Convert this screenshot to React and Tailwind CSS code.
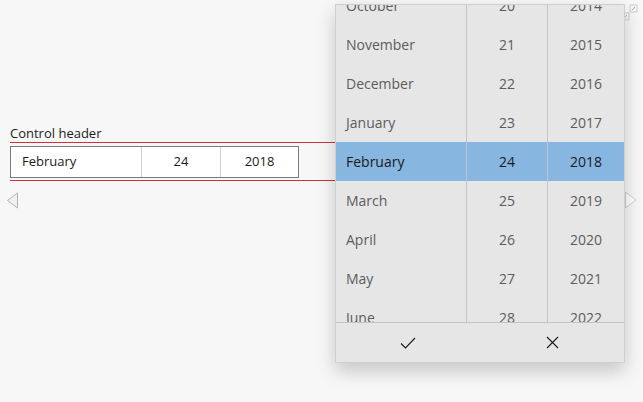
import React from 'react';

const months = ['October', 'November', 'December', 'January', 'February', 'March', 'April', 'May', 'June'];
const days = ['20', '21', '22', '23', '24', '25', '26', '27', '28'];
const years = ['2014', '2015', '2016', '2017', '2018', '2019', '2020', '2021', '2022'];
const SEL = 4;

function Column({ items, width, align, last }) {
  return (
    <div className={`flex flex-col -mt-[19px] ${width} ${last ? '' : 'border-r border-[#c4c4c4]'}`}>
      {items.map((it, i) => (
        <div
          key={it}
          className={`h-[39px] shrink-0 flex items-center ${align} ${
            i === SEL ? 'bg-[#87b6e0] text-[#1b1b1b]' : 'text-[#5c5c5c]'
          }`}
        >
          {it}
        </div>
      ))}
    </div>
  );
}

export default function App() {
  return (
    <div
      className="relative h-[402px] w-full overflow-hidden bg-[#f7f7f7]"
      style={{ fontFamily: '"Open Sans", "Noto Sans", sans-serif' }}
    >
      <div className="pt-[124px] pl-[10px]">
        <div className="text-[13px] leading-[18px] text-[#1b1b1b]">Control header</div>
        <div className="w-[326px] border-y border-[#d2313a] pt-[3px] pb-[2px]">
          <div className="flex h-[32px] w-[289px] border border-[#7a7a7a] bg-white text-[13px] text-[#1b1b1b]">
            <div className="flex w-[131px] items-center border-r border-[#d0d0d0] pl-[11px]">February</div>
            <div className="flex w-[79px] items-center justify-center border-r border-[#d0d0d0]">24</div>
            <div className="flex flex-1 items-center justify-center">2018</div>
          </div>
        </div>
      </div>

      {/* flip view arrows */}
      <svg className="absolute left-[6px] top-[192px]" width="13" height="17" viewBox="0 0 13 17">
        <path d="M11.5 1 L1.5 8.5 L11.5 16 Z" fill="#f0f0f0" stroke="#b4b4b4" strokeWidth="1" />
      </svg>
      <svg className="absolute left-[624px] top-[191px]" width="14" height="18" viewBox="0 0 14 18">
        <path d="M1.5 1 L12 9 L1.5 17 Z" fill="#ffffff" stroke="#cdcdcd" strokeWidth="1" />
      </svg>

      {/* expand glyph top right */}
      <svg className="absolute left-[621px] top-[4px]" width="17" height="17" viewBox="0 0 17 17">
        <rect x="9" y="1" width="7" height="7" fill="#f4f4f4" stroke="#cfcfcf" />
        <rect x="1" y="9" width="7" height="7" fill="#f4f4f4" stroke="#cfcfcf" />
        <path d="M11 6 L14 3 M3 14 L6 11" stroke="#b0b0b0" strokeWidth="1" />
      </svg>

      {/* picker flyout */}
      <div className="absolute left-[335px] top-[4px] w-[290px] border border-[#cfcfcf] bg-[#e6e6e6] shadow-[0_8px_18px_rgba(0,0,0,0.2)] text-[14px]">
        <div className="flex h-[317px] overflow-hidden">
          <Column items={months} width="w-[131px]" align="pl-[10px]" />
          <Column items={days} width="w-[81px]" align="justify-center" />
          <Column items={years} width="flex-1" align="justify-center" last />
        </div>
        <div className="flex h-[40px] border-t border-[#c4c4c4]">
          <div className="flex flex-1 items-center justify-center">
            <svg width="16" height="12" viewBox="0 0 16 12">
              <path d="M1 6.5 L5.5 11 L15 1" fill="none" stroke="#1b1b1b" strokeWidth="1.1" />
            </svg>
          </div>
          <div className="flex flex-1 items-center justify-center">
            <svg width="13" height="13" viewBox="0 0 13 13">
              <path d="M1 1 L12 12 M12 1 L1 12" fill="none" stroke="#1b1b1b" strokeWidth="1.1" />
            </svg>
          </div>
        </div>
      </div>
    </div>
  );
}
